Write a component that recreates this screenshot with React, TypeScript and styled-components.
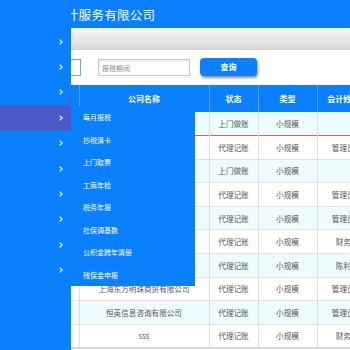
import styled, { createGlobalStyle } from 'styled-components';

const GlobalStyle = createGlobalStyle`
  html, body {
    margin: 0;
    padding: 0;
    overflow: hidden;
  }
  body {
    font-family: 'Noto Sans CJK SC', 'Noto Sans', sans-serif;
  }
`;

const BLUE = '#0a80ff';

const Page = styled.div`
  width: 350px;
  height: 350px;
  display: flex;
  background: ${BLUE};
  position: relative;
  overflow: hidden;
`;

const Sidebar = styled.nav`
  width: 71px;
  flex: none;
  padding-top: 29px;
  position: relative;
`;

const NavItem = styled.div<{ active?: boolean }>`
  height: 25.4px;
  display: flex;
  align-items: center;
  justify-content: flex-end;
  padding-right: 8px;
  box-sizing: border-box;
  background: ${(p) => (p.active ? '#4a5bc9' : 'transparent')};
`;

const ScrollThumb = styled.span`
  position: absolute;
  right: 0;
  top: 95px;
  width: 2px;
  height: 7px;
  background: #3b6bb0;
`;

const Main = styled.main`
  flex: 1;
  min-width: 0;
  overflow: hidden;
  display: flex;
  flex-direction: column;
`;

const Header = styled.header`
  height: 28px;
  display: flex;
  align-items: center;
  color: #fff;
  font-size: 12.5px;
  letter-spacing: 0.3px;
  white-space: nowrap;
`;

const Title = styled.h1`
  margin: 0 0 0 -18px;
  font-size: inherit;
  font-weight: normal;
`;

const Content = styled.section`
  flex: 1;
  background: #fff;
  display: flex;
  flex-direction: column;
`;

const ToolBar = styled.div`
  height: 22px;
  background: linear-gradient(#f6f6f6, #dadada);
  border-bottom: 1px solid #d0d0d0;
  box-sizing: border-box;
`;

const SearchRow = styled.div`
  height: 35px;
  display: flex;
  align-items: center;
  white-space: nowrap;
`;

const Input = styled.input<{ focused?: boolean }>`
  height: 17px;
  box-sizing: border-box;
  border: 1px solid ${(p) => (p.focused ? '#6ba6ec' : '#c8c8c8')};
  box-shadow: inset 1px 1px 2px rgba(0, 0, 0, 0.08);
  font-family: inherit;
  font-size: 7px;
  padding: 0 3px;
  outline: none;
  flex: none;
  &::placeholder {
    color: #8a8a8a;
  }
`;

const Button = styled.button`
  width: 57px;
  height: 18px;
  margin-left: 10px;
  margin-top: -2px;
  border: none;
  border-radius: 4px;
  background: ${BLUE};
  color: #fff;
  font-family: inherit;
  font-size: 8px;
  font-weight: bold;
  box-shadow: 1px 2px 3px rgba(0, 0, 0, 0.45);
  padding: 0;
  flex: none;
`;

const Table = styled.table`
  border-collapse: collapse;
  table-layout: fixed;
  width: 298px;
  font-size: 7.6px;
  color: #555;
  border-bottom: 2px solid #d8d8d8;
`;

const HeadCell = styled.th`
  height: 27px;
  padding: 0;
  background: ${BLUE};
  color: #fff;
  font-weight: bold;
  font-size: 8px;
  border-left: 1px solid #4da3ff;
  text-align: center;
  white-space: nowrap;
  overflow: hidden;
  &:first-child {
    border-left: none;
  }
`;

const Row = styled.tr<{ striped?: boolean; marked?: boolean }>`
  height: 23.6px;
  background: ${(p) => (p.striped ? '#effcff' : '#fff')};
  border-bottom: 1px solid ${(p) => (p.marked ? '#e0605a' : '#e2e2e2')};
`;

const Cell = styled.td`
  padding: 0;
  text-align: center;
  white-space: nowrap;
  overflow: hidden;
  border-left: 1px solid #dedede;
  &:first-child {
    border-left: none;
  }
`;

const Menu = styled.ul`
  position: absolute;
  left: 71px;
  top: 106px;
  width: 124px;
  margin: 0;
  padding: 0;
  list-style: none;
  background: ${BLUE};
  color: #fff;
`;

const MenuItem = styled.li`
  height: 22.5px;
  line-height: 22.5px;
  padding-left: 12px;
  font-size: 7px;
`;

const Chevron = () => (
  <svg width="4" height="6" viewBox="0 0 4 6">
    <polyline points="0.6,0.6 3.2,3 0.6,5.4" fill="none" stroke="#fff" strokeWidth="1.1" />
  </svg>
);

const rows = [
  { name: '', status: '上门做账', type: '小规模', acct: '' },
  { name: '', status: '代理记账', type: '小规模', acct: '管理员' },
  { name: '', status: '上门做账', type: '小规模', acct: '' },
  { name: '', status: '代理记账', type: '小规模', acct: '管理员' },
  { name: '', status: '代理记账', type: '小规模', acct: '管理员' },
  { name: '', status: '代理记账', type: '小规模', acct: '财务' },
  { name: '', status: '代理记账', type: '小规模', acct: '陈利' },
  { name: '上海东方明珠商贸有限公司', status: '代理记账', type: '小规模', acct: '管理员' },
  { name: '恒英信息咨询有限公司', status: '代理记账', type: '小规模', acct: '管理员' },
  { name: 'sss', status: '代理记账', type: '小规模', acct: '财务' },
];

const menuItems = ['每月报税', '抄税清卡', '上门取票', '工商年检', '税务年报', '社保调基数', '公积金跨年清册', '残保金申报'];

const App = () => {
  return (
    <Page>
      <GlobalStyle />
      <Sidebar>
        {Array.from({ length: 10 }).map((_, i) => (
          <NavItem key={i} active={i === 3}>
            <Chevron />
          </NavItem>
        ))}
        <ScrollThumb />
      </Sidebar>
      <Main>
        <Header>
          <Title>会计服务有限公司</Title>
        </Header>
        <Content>
          <ToolBar />
          <SearchRow>
            <Input focused style={{ width: 80, marginLeft: -70 }} />
            <Input placeholder="报税期间" style={{ width: 92, marginLeft: 17 }} />
            <Button>查询</Button>
          </SearchRow>
          <Table>
            <colgroup>
              <col style={{ width: 8 }} />
              <col style={{ width: 130 }} />
              <col style={{ width: 49 }} />
              <col style={{ width: 59 }} />
              <col style={{ width: 52 }} />
            </colgroup>
            <thead>
              <tr>
                <HeadCell />
                <HeadCell>公司名称</HeadCell>
                <HeadCell>状态</HeadCell>
                <HeadCell>类型</HeadCell>
                <HeadCell>会计姓名</HeadCell>
              </tr>
            </thead>
            <tbody>
              {rows.map((r, i) => (
                <Row key={i} striped={i % 2 === 0} marked={i === 0}>
                  <Cell />
                  <Cell>{r.name}</Cell>
                  <Cell>{r.status}</Cell>
                  <Cell>{r.type}</Cell>
                  <Cell>{r.acct}</Cell>
                </Row>
              ))}
            </tbody>
          </Table>
        </Content>
      </Main>
      <Menu>
        {menuItems.map((m) => (
          <MenuItem key={m}>{m}</MenuItem>
        ))}
      </Menu>
    </Page>
  );
};

export default App;
